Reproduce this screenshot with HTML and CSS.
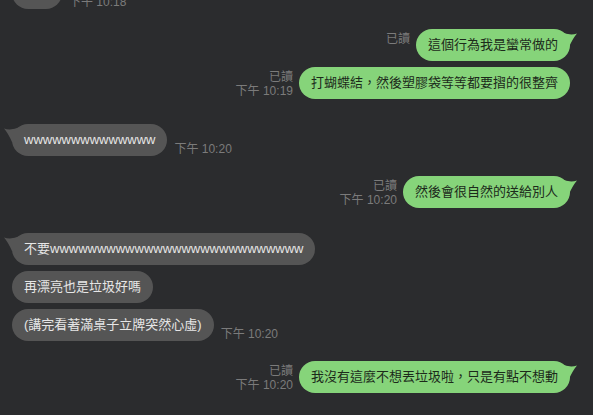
FILE: index.html
```html
<!DOCTYPE html>
<html lang="zh-Hant">
<head>
    <meta charset="UTF-8">
    <meta name="viewport" content="width=device-width, initial-scale=1.0">
    <title>LINE 聊天</title>
    <link rel="stylesheet" href="styles.css">
</head>
<body>
    <div class="chat">
        <!-- 上一則（被切掉） -->
        <div class="row in cut">
            <div class="bubble blank"></div>
            <div class="meta"><span>下午 10:18</span></div>
        </div>

        <div class="row out gap-out">
            <div class="meta"><span>已讀</span></div>
            <div class="bubble">這個行為我是蠻常做的
                <svg class="tail" width="16" height="18" viewBox="0 0 16 18"><path d="M0 3 Q9 7 16 4.5 Q12 9 8 18 L0 18 Z"/></svg>
            </div>
        </div>
        <div class="row out">
            <div class="meta"><span>已讀</span><span>下午 10:19</span></div>
            <div class="bubble">打蝴蝶結，然後塑膠袋等等都要摺的很整齊</div>
        </div>

        <div class="row in gap-in">
            <div class="bubble">wwwwwwwwwwwwww
                <svg class="tail" width="16" height="18" viewBox="0 0 16 18"><path d="M0 3 Q9 7 16 4.5 Q12 9 8 18 L0 18 Z"/></svg>
            </div>
            <div class="meta"><span>下午 10:20</span></div>
        </div>

        <div class="row out gap-out">
            <div class="meta"><span>已讀</span><span>下午 10:20</span></div>
            <div class="bubble">然後會很自然的送給別人
                <svg class="tail" width="16" height="18" viewBox="0 0 16 18"><path d="M0 3 Q9 7 16 4.5 Q12 9 8 18 L0 18 Z"/></svg>
            </div>
        </div>

        <div class="row in gap-in">
            <div class="bubble">不要wwwwwwwwwwwwwwwwwwwwwwwwwww
                <svg class="tail" width="16" height="18" viewBox="0 0 16 18"><path d="M0 3 Q9 7 16 4.5 Q12 9 8 18 L0 18 Z"/></svg>
            </div>
        </div>
        <div class="row in">
            <div class="bubble">再漂亮也是垃圾好嗎</div>
        </div>
        <div class="row in">
            <div class="bubble">(講完看著滿桌子立牌突然心虛)</div>
            <div class="meta"><span>下午 10:20</span></div>
        </div>

        <div class="row out gap-out">
            <div class="meta"><span>已讀</span><span>下午 10:20</span></div>
            <div class="bubble">我沒有這麼不想丟垃圾啦，只是有點不想動
                <svg class="tail" width="16" height="18" viewBox="0 0 16 18"><path d="M0 3 Q9 7 16 4.5 Q12 9 8 18 L0 18 Z"/></svg>
            </div>
        </div>
    </div>
</body>
</html>
```

FILE: styles.css
```css
html, body {
    margin: 0;
    height: 100%;
    overflow: hidden;
}
body {
    background: #2b2c2e;
    font-family: "Liberation Sans", "Noto Sans CJK TC", sans-serif;
}
.chat {
    display: flex;
    flex-direction: column;
}
.row {
    display: flex;
    align-items: flex-start;
    gap: 6px;
    margin-top: 6px;
}
.row.in { padding-left: 12px; gap: 7px; }
.row.out { justify-content: flex-end; padding-right: 23px; }
.row.cut { margin-top: -23px; }
.row.gap-in { margin-top: 25px; }
.row.gap-out { margin-top: 20px; }

.bubble {
    position: relative;
    font-size: 13px;
    line-height: 18px;
    padding: 7px 12px;
    border-radius: 16px;
    white-space: nowrap;
}
.row.in .bubble { background: #555555; color: #e6e6e6; }
.row.out .bubble { background: #86d47a; color: #1c2a1a; }
.bubble.blank { width: 26px; height: 18px; }

.tail {
    position: absolute;
    top: 0;
    display: block;
}
.row.out .tail { right: -7px; fill: #86d47a; }
.row.in .tail { left: -8px; fill: #555555; transform: scaleX(-1); }

.meta {
    display: flex;
    flex-direction: column;
    padding-top: 3px;
    font-size: 12px;
    line-height: 14px;
    color: #7b7b7b;
    white-space: nowrap;
}
.row.out .meta { align-items: flex-end; }
.row.in .meta { padding-top: 18px; }
```
